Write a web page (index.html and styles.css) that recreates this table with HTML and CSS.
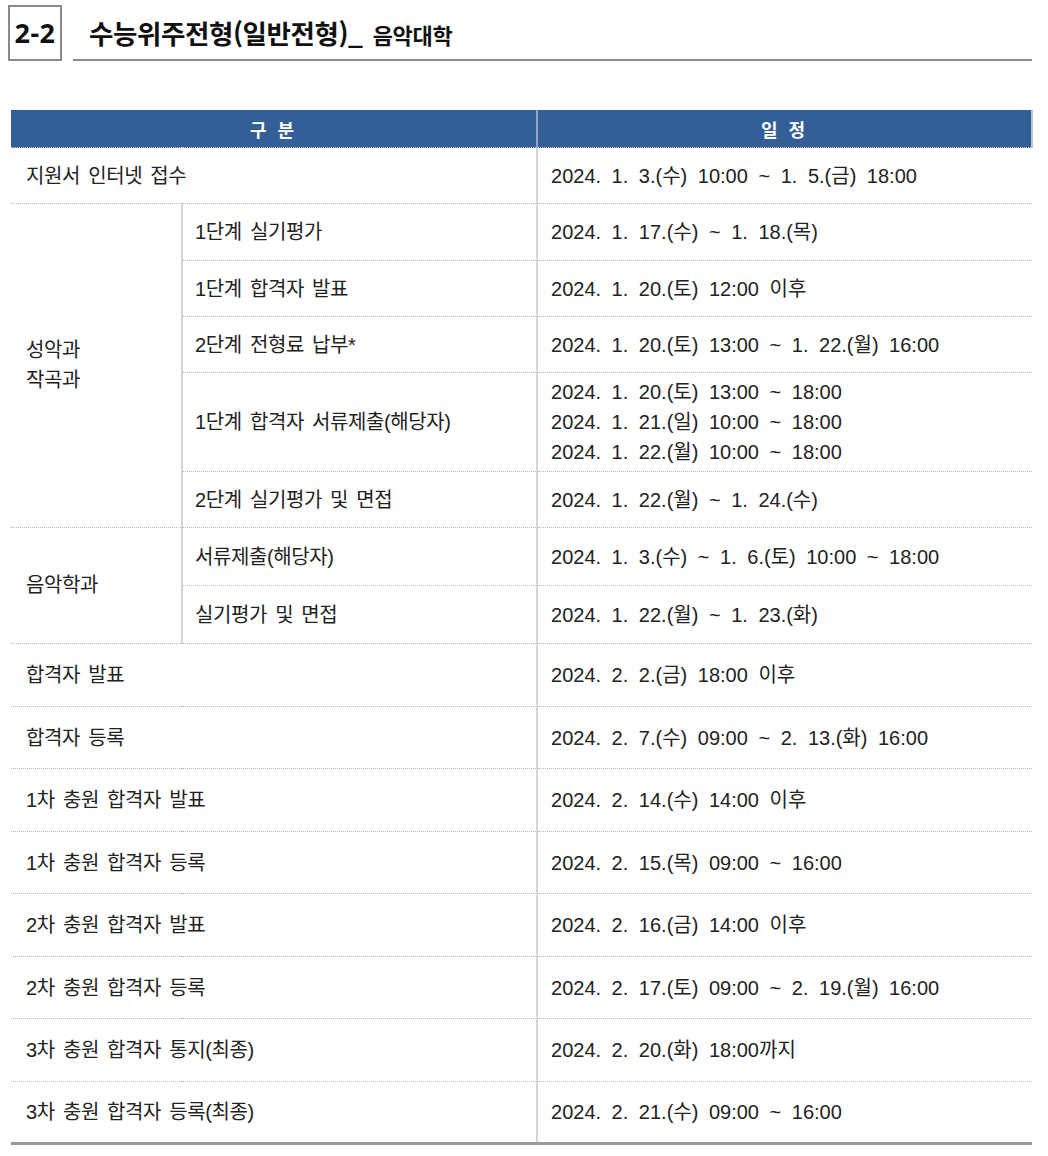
FILE: index.html
```html
<!DOCTYPE html>
<html lang="ko">
<head>
<meta charset="utf-8">
<link rel="stylesheet" href="styles.css">
</head>
<body>
<div class="page">
  <div class="title-row">
    <div class="num-box">2-2</div>
    <div class="title-text"><span class="main">수능위주전형(일반전형)_</span><span class="sub">음악대학</span></div>
  </div>
  <table class="sched">
    <colgroup><col class="c1"><col class="c2"><col class="c3"></colgroup>
    <thead>
      <tr><th colspan="2">구 분</th><th>일 정</th></tr>
    </thead>
    <tbody>
      <tr class="h56"><td colspan="2" class="k">지원서 인터넷 접수</td><td class="d">2024. 1. 3.(수) 10:00 ~ 1. 5.(금) 18:00</td></tr>
      <tr class="h57"><td rowspan="5" class="grp k">성악과<br>작곡과</td><td class="sub k">1단계 실기평가</td><td class="d">2024. 1. 17.(수) ~ 1. 18.(목)</td></tr>
      <tr class="h56"><td class="sub k">1단계 합격자 발표</td><td class="d">2024. 1. 20.(토) 12:00 이후</td></tr>
      <tr class="h56"><td class="sub k">2단계 전형료 납부*</td><td class="d">2024. 1. 20.(토) 13:00 ~ 1. 22.(월) 16:00</td></tr>
      <tr class="h99"><td class="sub k">1단계 합격자 서류제출(해당자)</td><td class="d multi">2024. 1. 20.(토) 13:00 ~ 18:00<br>2024. 1. 21.(일) 10:00 ~ 18:00<br>2024. 1. 22.(월) 10:00 ~ 18:00</td></tr>
      <tr class="h56"><td class="sub k">2단계 실기평가 및 면접</td><td class="d">2024. 1. 22.(월) ~ 1. 24.(수)</td></tr>
      <tr class="h58"><td rowspan="2" class="grp k">음악학과</td><td class="sub k">서류제출(해당자)</td><td class="d">2024. 1. 3.(수) ~ 1. 6.(토) 10:00 ~ 18:00</td></tr>
      <tr class="h58"><td class="sub k">실기평가 및 면접</td><td class="d">2024. 1. 22.(월) ~ 1. 23.(화)</td></tr>
      <tr class="h63"><td colspan="2" class="k">합격자 발표</td><td class="d">2024. 2. 2.(금) 18:00 이후</td></tr>
      <tr class="h62"><td colspan="2" class="k">합격자 등록</td><td class="d">2024. 2. 7.(수) 09:00 ~ 2. 13.(화) 16:00</td></tr>
      <tr class="h63"><td colspan="2" class="k">1차 충원 합격자 발표</td><td class="d">2024. 2. 14.(수) 14:00 이후</td></tr>
      <tr class="h62"><td colspan="2" class="k">1차 충원 합격자 등록</td><td class="d">2024. 2. 15.(목) 09:00 ~ 16:00</td></tr>
      <tr class="h63"><td colspan="2" class="k">2차 충원 합격자 발표</td><td class="d">2024. 2. 16.(금) 14:00 이후</td></tr>
      <tr class="h62"><td colspan="2" class="k">2차 충원 합격자 등록</td><td class="d">2024. 2. 17.(토) 09:00 ~ 2. 19.(월) 16:00</td></tr>
      <tr class="h63"><td colspan="2" class="k">3차 충원 합격자 통지(최종)</td><td class="d">2024. 2. 20.(화) 18:00까지</td></tr>
      <tr class="h62 last"><td colspan="2" class="k">3차 충원 합격자 등록(최종)</td><td class="d">2024. 2. 21.(수) 09:00 ~ 16:00</td></tr>
    </tbody>
  </table>
</div>
</body>
</html>
```

FILE: styles.css
```css
html, body {
  margin: 0;
  padding: 0;
  background: #fff;
}
body {
  font-family: "Liberation Sans", "Noto Sans CJK KR", sans-serif;
  color: #222;
}
.page {
  padding: 5px 16px 0 8px;
}
.title-row {
  display: flex;
  align-items: flex-end;
  height: 56px;
}
.num-box {
  box-sizing: border-box;
  width: 54px;
  height: 56px;
  border: 2px solid #8a8a8a;
  display: flex;
  align-items: center;
  justify-content: center;
  font-family: "Noto Sans", "Noto Sans CJK KR", sans-serif;
  font-weight: 700;
  font-size: 27px;
  letter-spacing: 0.5px;
  color: #111;
  padding-bottom: 1px;
}
.title-text {
  flex: 1;
  margin-left: 11px;
  border-bottom: 2px solid #8a8a8a;
  height: 55px;
  box-sizing: border-box;
  padding-left: 16px;
  display: flex;
  align-items: center;
  padding-bottom: 0;
  font-family: "Noto Sans CJK KR", sans-serif;
  font-weight: 700;
  color: #111;
}
.title-text .main {
  font-size: 26.5px;
  letter-spacing: -0.4px;
}
.title-text .sub {
  font-size: 22px;
  margin-left: 10px;
  margin-top: 3px;
  letter-spacing: -0.3px;
}
.sched {
  margin-top: 49px;
  margin-left: 3px;
  width: 1021px;
  border-collapse: collapse;
  table-layout: fixed;
  font-size: 20px;
}
.c1 { width: 171px; }
.c2 { width: 355px; }
.c3 { width: 495px; }
.sched th {
  background: #335e96;
  color: #fff;
  height: 37px;
  padding: 0;
  font-family: "Noto Sans CJK KR", sans-serif;
  font-weight: 700;
  font-size: 18px;
  letter-spacing: 3px;
  border-bottom: 1px dotted #c6ccd6;
  border-right: 2px solid #90a6c6;
}
.sched th:last-child {
  border-right: 2px solid #b7c4d8;
}
.sched td {
  padding: 0 0 0 15px;
  vertical-align: middle;
  border-bottom: 1px dotted #b9b9b9;
  border-right: 2px solid #d4d4d4;
  line-height: 30px;
  word-spacing: 5px;
  white-space: nowrap;
}
.sched td.k {
  word-spacing: 3px;
  letter-spacing: -0.4px;
}
.sched td.d {
  padding-left: 13px;
  border-right: none;
}
.sched td.sub {
  padding-left: 12px;
}
.sched td.grp {
  line-height: 30px;
  padding-bottom: 2px;
}
.h56 { height: 56px; }
.h57 { height: 57px; }
.h58 { height: 58px; }
.h62 { height: 62px; }
.h63 { height: 63px; }
.h99 { height: 99px; }
.sched tr.last td {
  border-bottom: 3px solid #999;
}
```
